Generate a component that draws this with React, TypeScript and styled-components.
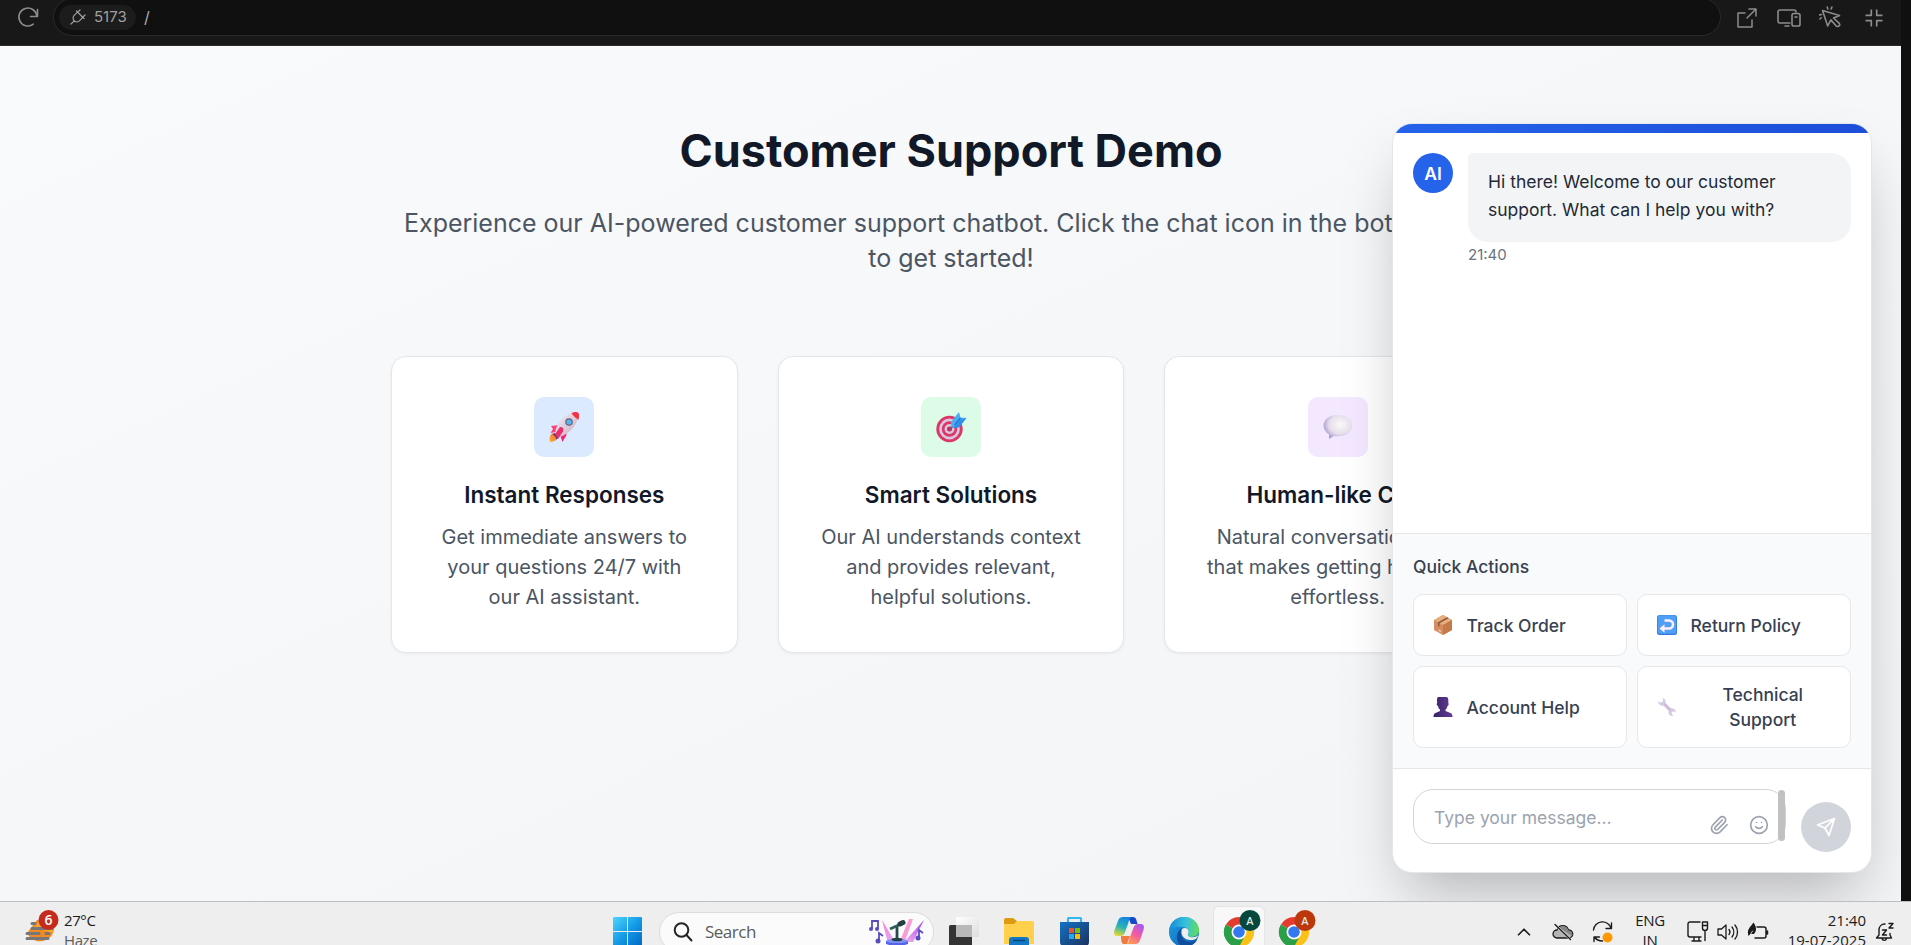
import React from "react";
import styled, { createGlobalStyle } from "styled-components";
import { Paperclip, Smile, ChevronUp } from "lucide-react";

const GlobalStyle = createGlobalStyle`
  *, *::before, *::after { box-sizing: border-box; }
  body { margin: 0; overflow: hidden; font-family: Inter, "Liberation Sans", sans-serif; }
  h1, h2, h3, p { margin: 0; }
  button { font: inherit; margin: 0; }
  svg { display: block; flex: none; }
`;

const Screen = styled.div`
  display: flex;
  flex-direction: column;
  width: 1911px;
  height: 945px;
  overflow: hidden;
  background: #101010;
`;

const Workspace = styled.div`
  display: flex;
  height: 901px;
  flex: none;
`;

const Viewport = styled.div`
  display: flex;
  flex-direction: column;
  width: 1901px;
`;

/* Preview toolbar */

const Toolbar = styled.header`
  display: flex;
  align-items: flex-start;
  height: 46px;
  flex: none;
  padding-left: 16px;
  background: #181818;
  border-bottom: 1px solid #2b2b2b;
  color: #8c8c8c;
  overflow: hidden;
`;

const ToolIcon = styled.span<{ $left: number; $top: number }>`
  margin-left: ${(p) => p.$left}px;
  margin-top: ${(p) => p.$top}px;
`;

const AddressBar = styled.div`
  display: flex;
  align-items: center;
  width: 1668px;
  height: 38px;
  margin: -2px 0 0 13px;
  padding-left: 5px;
  background: #101010;
  border: 1px solid #292929;
  border-radius: 19px;
  font-size: 16px;
  line-height: 20px;
  color: #ababab;
`;

const PortChip = styled.span`
  display: flex;
  align-items: center;
  gap: 8px;
  width: 77px;
  height: 25px;
  padding-left: 11px;
  margin-right: 8px;
  border-radius: 13px;
  background: #1c1c1c;
  color: #a0a0a0;
  font-size: 15px;
`;

/* Demo page */

const Page = styled.main`
  position: relative;
  flex: 1;
  overflow: hidden;
  padding: 80px 0 0 1px;
  background: linear-gradient(to bottom right, #f9fafb, #f3f4f6);
`;

const Content = styled.div`
  width: 1120px;
  margin: 0 auto;
  text-align: center;
`;

const Title = styled.h1`
  font-size: 45px;
  line-height: 50px;
  font-weight: 700;
  color: #111827;
`;

const Lead = styled.p`
  margin-top: 30px;
  font-size: 25px;
  line-height: 35px;
  color: #4b5563;
`;

const Features = styled.div`
  display: grid;
  grid-template-columns: repeat(3, 1fr);
  gap: 40px;
  margin-top: 80px;
`;

const FeatureCard = styled.article`
  display: flex;
  flex-direction: column;
  align-items: center;
  height: 297px;
  padding: 40px;
  background: #fff;
  border: 1px solid #e5e7eb;
  border-radius: 15px;
  box-shadow: 0 1px 3px rgba(0, 0, 0, 0.06);
`;

const FeatureIcon = styled.div<{ $bg: string }>`
  display: flex;
  align-items: center;
  justify-content: center;
  width: 60px;
  height: 60px;
  border-radius: 10px;
  background: ${(p) => p.$bg};
`;

const FeatureTitle = styled.h3`
  margin-top: 20px;
  font-size: 22.5px;
  line-height: 35px;
  font-weight: 600;
  color: #111827;
  white-space: nowrap;
`;

const FeatureText = styled.p`
  margin-top: 10px;
  font-size: 20px;
  line-height: 30px;
  color: #4b5563;
`;

/* Chat widget */

const ChatPanel = styled.section`
  position: absolute;
  top: 77px;
  right: 29px;
  display: flex;
  flex-direction: column;
  width: 480px;
  height: 750px;
  border: 1px solid #e5e7eb;
  border-radius: 20px;
  background: #fff;
  overflow: hidden;
  box-shadow: 0 31px 62px -14px rgba(0, 0, 0, 0.27);
`;

const ChatHeader = styled.div`
  height: 9px;
  flex: none;
  background: linear-gradient(to right, #2563eb, #1d4ed8);
`;

const Messages = styled.div`
  display: flex;
  align-items: flex-start;
  gap: 15px;
  height: 400px;
  padding: 20px;
`;

const Avatar = styled.div`
  display: flex;
  align-items: center;
  justify-content: center;
  width: 40px;
  height: 40px;
  flex: none;
  border-radius: 50%;
  background: #2563eb;
  color: #fff;
  font-size: 17.5px;
  font-weight: 600;
`;

const MessageBody = styled.div`
  flex: 1;
`;

const Bubble = styled.p`
  height: 89px;
  padding: 15px 20px;
  border-radius: 20px;
  border-top-left-radius: 5px;
  background: #f3f4f6;
  color: #1f2937;
  font-size: 17.5px;
  line-height: 28.4px;
`;

const Timestamp = styled.div`
  margin-top: 3px;
  font-size: 15px;
  line-height: 20px;
  color: #6b7280;
`;

const QuickActions = styled.div`
  height: 235px;
  padding: 20px 20px 0;
  border-top: 1px solid #e5e7eb;
  background: #f9fafb;
`;

const QuickTitle = styled.div`
  margin-bottom: 15px;
  font-size: 17.5px;
  line-height: 25px;
  font-weight: 500;
  color: #374151;
`;

const ActionGrid = styled.div`
  display: grid;
  grid-template-columns: 1fr 1fr;
  grid-template-rows: 62px 82px;
  gap: 10px;
`;

const ActionButton = styled.button<{ $wrap?: boolean }>`
  display: flex;
  align-items: center;
  gap: 13.5px;
  padding: 0 15px 0 19px;
  border: 1px solid #e5e7eb;
  border-radius: 10px;
  background: #fff;
  color: #374151;
  font-size: 17.5px;
  line-height: 25px;
  font-weight: 500;
  span {
    flex: ${(p) => (p.$wrap ? 1 : "none")};
  }
`;

const Composer = styled.div`
  display: flex;
  align-items: flex-start;
  flex: 1;
  padding: 20px;
  border-top: 1px solid #e5e7eb;
`;

const InputShell = styled.div`
  display: flex;
  align-items: flex-start;
  width: 373px;
  height: 55px;
  padding-left: 20px;
  border: 1px solid #d1d5db;
  border-radius: 20px;
  color: #9ca3af;
  font-size: 17.5px;
  line-height: 25px;
`;

const Placeholder = styled.span`
  flex: 1;
  padding-top: 15px;
`;

const InputTools = styled.div`
  display: flex;
  gap: 20px;
  margin: 25px 9px 0 0;
`;

const ScrollThumb = styled.span`
  width: 7px;
  height: 51px;
  border-radius: 3.5px;
  background: #c1c1c1;
`;

const SendButton = styled.button`
  display: flex;
  align-items: center;
  justify-content: center;
  width: 50px;
  height: 50px;
  margin: 13px 0 0 15px;
  padding: 0;
  border: 0;
  border-radius: 50%;
  background: #d1d5db;
  color: #fff;
`;

/* Desktop taskbar */

const Taskbar = styled.footer`
  display: flex;
  align-items: center;
  height: 60px;
  flex: none;
  background: #eee;
  border-top: 1px solid #bdbfc0;
  font-family: "Open Sans", "Noto Sans", sans-serif;
  color: #1b1b1b;
  font-size: 15px;
  line-height: 20px;
`;

const Weather = styled.div`
  display: flex;
  align-items: center;
  gap: 5px;
  width: 602px;
  padding-left: 23px;
`;

const WeatherText = styled.div`
  padding-bottom: 4px;
  letter-spacing: -0.4px;
  div + div { color: #5d5d5d; letter-spacing: -0.4px; }
`;

const TaskSlot = styled.div<{ $active?: boolean }>`
  display: flex;
  align-items: center;
  justify-content: center;
  width: 50px;
  height: 50px;
  margin-right: 5px;
  border-radius: 5px;
  background: ${(p) => (p.$active ? "#f8f8f8" : "transparent")};
  box-shadow: ${(p) => (p.$active ? "0 0 0 1px #e5e5e5" : "none")};
`;

const SearchBox = styled.div`
  display: flex;
  align-items: center;
  width: 275px;
  height: 40px;
  padding: 0 8px 0 13px;
  margin: 0 5px 0 2px;
  border: 1px solid #dcdcdc;
  border-radius: 20px;
  background: #fbfbfb;
  color: #5c5c5c;
  font-size: 17px;
  span { flex: 1; margin-left: 12px; letter-spacing: -0.5px; }
`;

const Tray = styled.div`
  display: flex;
  align-items: center;
  margin-left: auto;
  padding-right: 8px;
`;

const TraySlot = styled.div<{ $w: number }>`
  display: flex;
  justify-content: center;
  width: ${(p) => p.$w}px;
`;

const TrayText = styled.div<{ $w: number; $right?: boolean }>`
  width: ${(p) => p.$w}px;
  padding-bottom: 4px;
  padding-right: ${(p) => (p.$right ? 1 : 5)}px;
  text-align: ${(p) => (p.$right ? "right" : "center")};
  letter-spacing: ${(p) => (p.$right ? "0" : "-0.35px")};
`;

const line = { fill: "none", stroke: "currentColor", strokeLinecap: "round", strokeLinejoin: "round" } as const;

const ReloadIcon = () => (
  <svg width="24" height="24" viewBox="0 0 24 24" {...line} strokeWidth="1.6">
    <path d="M17.300 18.200A9 9 0 1 1 20.800 10M21.500 3.500v7h-7" />
  </svg>
);

const PlugIcon = () => (
  <svg width="16" height="16" viewBox="0 0 16 16" {...line} strokeWidth="1.2">
    <path d="M1 15l3.200-3.200M10 1L7.800 3.200M15 6l-2.200 2.200M6.500 2l7.500 7.500M7.500 3.200L4 6.700c-1.500 1.600-1 4 .2 5.100s3.600 1.700 5.200.1l3.300-3.500" />
  </svg>
);

const PopOutIcon = () => (
  <svg width="20" height="20" viewBox="0 0 20 20" {...line} strokeWidth="1.5">
    <path d="M8 5H1v14h14v-7M12 1h7v7M19 1l-9 9" />
  </svg>
);

const DevicesIcon = () => (
  <svg width="24" height="18" viewBox="0 0 24 18" {...line} strokeWidth="1.6">
    <path d="M13 14H3a2 2 0 0 1-2-2V3a2 2 0 0 1 2-2h14a2 2 0 0 1 2 2M8 17h4" />
    <rect x="15" y="4.5" width="8" height="12.5" rx="1.8" />
    <path d="M18 8h2" />
  </svg>
);

const PickerIcon = () => (
  <svg width="22" height="22" viewBox="0 0 22 22" {...line} strokeWidth="1.6">
    <path d="M3.5 4.5l5.2 15.4 3.2-6 5.5 6.3c2 1 4.2-.8 2.9-2.8L14.500 12l6-2.5z" />
    <path d="M8.800 3L8.200 1M12.200 3l.7-2M2.500 8.500l-2 .4M2.200 11.800L1 13" />
  </svg>
);

const CollapseIcon = () => (
  <svg width="18" height="18" viewBox="0 0 18 18" {...line} strokeWidth="1.7" strokeLinecap="butt">
    <path d="M.5 6.300h5.800V.500M17.500 6.300h-5.800V.500M.5 11.700h5.800v5.800M17.500 11.700h-5.800v5.800" />
  </svg>
);

const RocketArt = () => (
  <svg width="32" height="32" viewBox="0 0 32 32">
    <defs>
      <linearGradient id="rkBody" x1="0" y1="0" x2="1" y2="1">
        <stop offset="0" stopColor="#f4f0f8" /><stop offset="1" stopColor="#c9a9bd" />
      </linearGradient>
      <linearGradient id="rkFire" x1="1" y1="0" x2="0" y2="1">
        <stop offset="0" stopColor="#f0663c" /><stop offset="1" stopColor="#ffb031" />
      </linearGradient>
    </defs>
    <path d="M3.500 23c2-2 6 0 6 3s-3 4.500-7.500 5C1 28 1.500 25 3.500 23z" fill="url(#rkFire)" />
    <path d="M3 15l9-1-4 7-5.500 1 2.500-4z" fill="#ff3f78" />
    <path d="M18 19l.500 5-4 7-2.500-7z" fill="#f5246b" />
    <path d="M6.500 22l4 5-2 1.500c-1-3-2-4-4-5z" fill="#5b3d77" />
    <path d="M7 22C8 12 17 2.500 27 1.500c3 0 4 1 3.500 4C29 14 21 23 12 26z" fill="url(#rkBody)" />
    <path d="M23.500 2c7-2.500 8.500-.5 7 6.800C29 8 25 5 23.500 2z" fill="#f5303f" />
    <path d="M12 16c3 0 4 2 3 4.500L10 28l-3-5z" fill="#e92f70" />
    <circle cx="21" cy="11" r="3.800" fill="#66607d" />
    <circle cx="21" cy="11" r="2.600" fill="#55b4f2" />
  </svg>
);

const TargetArt = () => (
  <svg width="32" height="32" viewBox="0 0 32 32">
    <circle cx="14.500" cy="18" r="13.200" fill="#dc3667" />
    <circle cx="14.500" cy="18" r="10.400" fill="#d9c7df" />
    <circle cx="14.500" cy="18" r="7.700" fill="#dc3667" />
    <circle cx="14.500" cy="18" r="5" fill="#d9c7df" />
    <circle cx="14.500" cy="18" r="2.500" fill="#c72d5b" />
    <path d="M15 18l8-8" stroke="#7b5682" strokeWidth="2" />
    <path d="M16.500 16l-.500-5L24 1l1.500 5.500 6 .5-8 8.500z" fill="#48aff5" />
    <path d="M18 17l8-8.500 5.500-1.500L24 16.500z" fill="#2f8fe8" />
    <path d="M19.500 14l6-7" stroke="#2374ce" strokeWidth="1.400" />
  </svg>
);

const BubbleArt = () => (
  <svg width="32" height="26" viewBox="0 0 32 26">
    <defs>
      <radialGradient id="bb" cx=".6" cy=".4" r=".62">
        <stop offset="0" stopColor="#fbfafb" /><stop offset=".65" stopColor="#e6deea" /><stop offset="1" stopColor="#ad9fd0" />
      </radialGradient>
    </defs>
    <path d="M16 1C7 1 1.500 6 1.500 11.500c0 4 2.500 7 5.500 9V25l5-3c11 1.500 18-3.500 18-10.500S24 1 16 1z" fill="url(#bb)" />
  </svg>
);

const BoxArt = () => (
  <svg width="20" height="20" viewBox="0 0 20 20">
    <path d="M1 5l9-5 9 5v10l-9 5-9-5z" fill="#d58d5d" />
    <path d="M1 5l9-5 9 5-9 5z" fill="#e7af7c" />
    <path d="M10 10l9-5v10l-9 5z" fill="#c47a4b" />
    <path d="M5 7.300l9-5 1.700.900L6.500 8.300v3.500L5 11z" fill="#8b5a44" />
    <path d="M5.500 14l2.500 1.500v2L5.500 16z" fill="#f1bcb8" />
  </svg>
);

const ReturnArt = () => (
  <svg width="20" height="20" viewBox="0 0 20 20">
    <rect width="20" height="20" rx="2.500" fill="#3479df" />
    <rect x=".7" y=".3" width="18.500" height="18.500" rx="2" fill="#4f9ff8" />
    <path d="M7.500 5.500h4.500a4 4 0 0 1 0 8H6" fill="none" stroke="#fff0fb" strokeWidth="2.600" />
    <path d="M2.500 13.500l5-4.300v8.600z" fill="#fff0fb" />
  </svg>
);

const PersonArt = () => (
  <svg width="20" height="20" viewBox="0 0 20 20">
    <defs>
      <linearGradient id="pp" x1="0" x2="1">
        <stop offset="0" stopColor="#3a2467" /><stop offset="1" stopColor="#633d98" />
      </linearGradient>
    </defs>
    <path d="M5 0h9c1.500 1 1.500 4 1.300 6 .8.500.3 3-.8 3-.4 2-1 3-2 3.700V14l5 2c1.500.600 2 2 2 4H.500c0-2 .5-3.400 2-4l4.500-2v-1.300C6 12 5.300 11 5 9c-1.200 0-1.700-2.500-.8-3C4 4 3.500 1 5 0z" fill="url(#pp)" />
  </svg>
);

const WrenchArt = () => (
  <svg width="20" height="20" viewBox="0 0 20 20">
    <path d="M5.500.800c2.800 1 3.600 3.400 3 5.200l5.200 5.200c2.600-.4 5 1 5.300 4l-2.700-1-1.900 1.900 1.800 3.100c-3.400 0-5.200-2.200-4.600-5.200L6.300 8.700C3.600 9 1.200 7.400 1 4.300l3 1.400 2.200-1.900z" fill="#d6cadf" />
    <path d="M7 6.500l6.500 6.500" stroke="#c4b1e0" strokeWidth="1.300" />
  </svg>
);

const SendIcon = () => (
  <svg width="20" height="20" viewBox="0 0 20 20" {...line} strokeWidth="1.700">
    <path d="M18.500 1.500L1.500 8l7.500 3 4 7.500zM18.500 1.500L9 11" />
  </svg>
);

const HazeIcon = () => (
  <svg width="36" height="48" viewBox="0 0 36 48">
    <path d="M4 25a14 14 0 0 0 26-12l-16-1z" fill="#f28a24" />
    <path d="M12 19a14 14 0 0 1 19-6c1 5 0 9-2 12z" fill="#f9a62a" />
    <path d="M9 15.500h3M9 20.500h20M4 25.500h12M23 25.500h3M4 30.500h21" stroke="#75777a" strokeWidth="3" strokeLinecap="round" />
    <circle cx="25.500" cy="12" r="10" fill="#c42b1c" />
    <text x="25.500" y="17" textAnchor="middle" fontSize="14" fontWeight="600" fill="#fff">6</text>
  </svg>
);

const WindowsIcon = () => (
  <svg width="29" height="29" viewBox="0 0 29 29">
    <defs>
      <linearGradient id="win" x1="0" y1="0" x2="1" y2="1">
        <stop offset="0" stopColor="#50d5ff" /><stop offset=".5" stopColor="#159be7" /><stop offset="1" stopColor="#0067c5" />
      </linearGradient>
    </defs>
    <path d="M1 0h13v14H0V1a1 1 0 0 1 1-1zM15 0h13a1 1 0 0 1 1 1v13H15zM0 15h14v14H0zM15 15h14v14H15z" fill="url(#win)" />
  </svg>
);

const MagnifierIcon = () => (
  <svg width="20" height="20" viewBox="0 0 20 20" {...line} strokeWidth="2" color="#252525">
    <circle cx="8.500" cy="8" r="6.800" /><path d="M13.500 13l5 5.500" />
  </svg>
);

const MusicArt = () => (
  <svg width="56" height="30" viewBox="0 0 56 30">
    <defs>
      <linearGradient id="beamA" x1="0" y1="0" x2="1" y2="1"><stop offset="0" stopColor="#ff7ad1" /><stop offset="1" stopColor="#d9b0fc" /></linearGradient>
      <linearGradient id="beamB" x1="1" y1="0" x2="0" y2="1"><stop offset="0" stopColor="#a642ef" /><stop offset="1" stopColor="#f6b4ec" /></linearGradient>
    </defs>
    <path d="M13 3l12 20-6 3z" fill="url(#beamA)" />
    <path d="M40 2h4l-8 22h-5z" fill="#fa9cd7" />
    <path d="M55 3L35 25h9z" fill="url(#beamB)" />
    <path d="M28 9v14" stroke="#254b4b" strokeWidth="2.800" />
    <path d="M21 12l11-5" stroke="#315d5b" strokeWidth="3" />
    <path d="M31 7l3-1.500" stroke="#223e43" strokeWidth="5" strokeLinecap="round" />
    <path d="M17 24h22v3q-11 4-22 0z" fill="#5663e9" /><ellipse cx="28" cy="24" rx="11" ry="2" fill="#7d94fb" />
    <ellipse cx="28" cy="22.500" rx="5.500" ry="1.800" fill="#243f47" />
    <g fill="none" stroke="#584bbd" strokeWidth="1.800"><path d="M3 12V4h6v8M10 24v-8l4 3M50 21v-8l4 3" /></g>
    <g fill="#584bbd"><circle cx="2" cy="12" r="2" /><circle cx="8" cy="12" r="2" /><circle cx="9" cy="24" r="2.500" /><circle cx="49" cy="21" r="2.500" /></g>
  </svg>
);

const TaskViewIcon = () => (
  <svg width="30" height="29" viewBox="0 0 30 29">
    <defs><linearGradient id="tv" x1="0" x2="1" y2="1"><stop offset="0" stopColor="#fff" /><stop offset="1" stopColor="#ddd" /></linearGradient></defs>
    <rect y="8" width="23" height="21" rx="1.500" fill="#343434" />
    <rect x="7" y="0" width="23" height="20" rx="1.500" fill="url(#tv)" />
    <path d="M7 8h16v12H8.500a1.500 1.500 0 0 1-1.500-1.500z" fill="#b8b8b8" />
  </svg>
);

const FolderIcon = () => (
  <svg width="30" height="28" viewBox="0 0 30 28">
    <path d="M0 2a2 2 0 0 1 2-2h7l4 3-2 4H0z" fill="#dc9b12" />
    <path d="M0 6h10l3-3h15a2 2 0 0 1 2 2v21H0z" fill="#ffd04c" />
    <path d="M5 28v-6a3 3 0 0 1 3-3h14a3 3 0 0 1 3 3v6z" fill="#1278c5" />
    <path d="M9 22.500h12" stroke="#07477c" strokeWidth="1.500" />
  </svg>
);

const StoreIcon = () => (
  <svg width="29" height="29" viewBox="0 0 29 29">
    <defs><linearGradient id="st" x1="0" x2="1" y2="1"><stop offset="0" stopColor="#1273c5" /><stop offset="1" stopColor="#1d315f" /></linearGradient></defs>
    <path d="M8 6V2a1 1 0 0 1 1-1h11a1 1 0 0 1 1 1v4" fill="none" stroke="#35b6ee" strokeWidth="2.200" />
    <path d="M0 5h29v20a4 4 0 0 1-4 4H4a4 4 0 0 1-4-4z" fill="url(#st)" />
    <path d="M9 11h5v5H9z" fill="#f25022" /><path d="M15 11h5v5h-5z" fill="#7fba00" />
    <path d="M9 17h5v5H9z" fill="#28a8ea" /><path d="M15 17h5v5h-5z" fill="#ffb900" />
  </svg>
);

const CopilotIcon = () => (
  <svg width="30" height="29" viewBox="0 0 30 29">
    <defs>
      <linearGradient id="cpA" x1=".5" y1="0" x2=".2" y2="1"><stop offset="0" stopColor="#1687df" /><stop offset=".5" stopColor="#29b4b6" /><stop offset="1" stopColor="#eadb2c" /></linearGradient>
      <linearGradient id="cpB" x1=".8" y1="0" x2=".2" y2="1"><stop offset="0" stopColor="#a45af1" /><stop offset=".5" stopColor="#f45b9e" /><stop offset="1" stopColor="#ffa14b" /></linearGradient>
    </defs>
    <path d="M14 0h5c3 0 3.500 3 4.500 7H17z" fill="#1746c9" />
    <path d="M7 19h9l-3 8H9.500c-2 0-2.500-4-2.500-8z" fill="#f17a42" />
    <path d="M9 0h9c-3 1-3 4-4 7l-3 8c-1 3-2 4-5 4H3c-3 0-3.500-3-2.500-6L4 4c1-3 2-4 5-4z" fill="url(#cpA)" />
    <path d="M20 27h-8c3-1 3-4 4-7l3-8c1-3 2-5 5-5h3c3 0 3.500 3 2.500 6L26 23c-1 3-2 4-6 4z" fill="url(#cpB)" />
  </svg>
);

const EdgeIcon = () => (
  <svg width="30" height="30" viewBox="0 0 30 30">
    <defs>
      <linearGradient id="egA" x1="0" y1=".4" x2="1" y2=".5"><stop offset="0" stopColor="#168bd5" /><stop offset=".55" stopColor="#38c2dc" /><stop offset="1" stopColor="#62dc57" /></linearGradient>
      <linearGradient id="egB" x1="0" y1="0" x2="1" y2="1"><stop offset="0" stopColor="#1aa2e6" /><stop offset="1" stopColor="#105aad" /></linearGradient>
    </defs>
    <circle cx="15" cy="15" r="15" fill="url(#egB)" />
    <path d="M0 14C1 5 7 0 15 0c9 0 15 6 15 13 0 5-4 7-8 7-3 0-4-2-3-3 2-3 0-7-5-7C8 9 2 10 0 14z" fill="url(#egA)" />
    <path d="M13 11c-3 6 0 14 8 14 3 0 5-1 7-2-2 4-7 7-13 7C7 28 5 16 13 11z" fill="#104e9d" />
    <path d="M13 12c5-3 8 2 6 5-1 2 2 4 6 3 2 0 3-1 4-2 0 3-3 5-7 5-7 0-11-5-9-11z" fill="#eee" />
  </svg>
);

const ChromeIcon = ({ badge }: { badge: string }) => (
  <svg width="50" height="50" viewBox="0 0 50 50">
    <circle cx="25" cy="25" r="15" fill="#fff" />
    <path d="M25 25L12 17.500A15 15 0 0 1 38 17.500z" fill="#e33b2e" />
    <path d="M25 25L38 17.500A15 15 0 0 1 25 40z" fill="#fbc116" />
    <path d="M25 25V40A15 15 0 0 1 12 17.500z" fill="#2b9f48" />
    <path d="M25 18h13A15 15 0 0 1 25 40l6.500-11.500z" fill="#fbc116" />
    <path d="M12 17.500A15 15 0 0 0 25 40l6-11.500-12 0z" fill="#2b9f48" />
    <circle cx="25" cy="25" r="7.500" fill="#fff" /><circle cx="25" cy="25" r="5.800" fill="#3478ef" />
    <circle cx="36" cy="13.500" r="10.500" fill={badge} />
    <text x="36" y="17.500" textAnchor="middle" fontSize="11" fontWeight="600" fill="#dce5df">A</text>
  </svg>
);

const CloudOffIcon = () => (
  <svg width="22" height="18" viewBox="0 0 22 18" {...line} strokeWidth="1.300">
    <path d="M5 15a4 4 0 0 1 0-8 6 6 0 0 1 11.500 0A4 4 0 0 1 17 15z" fill="#b4b4b4" />
    <path d="M7 4.500a6 6 0 0 1 9.500 3C20 8 21 11 20 13z" fill="#858585" stroke="none" />
    <path d="M4 2.500l14.500 14" stroke="#ddd" strokeWidth="2.400" /><path d="M3 1.500l15.500 15" />
  </svg>
);

const SyncIcon = () => (
  <svg width="22" height="22" viewBox="0 0 22 22" {...line} strokeWidth="1.400">
    <path d="M1.500 9A9 9 0 0 1 19 7M19.500 2v5.500H14M7.500 16H2v4.500M2.500 16c2 3 4 4 8 4" />
    <circle cx="15.500" cy="16.500" r="5" fill="#ff9800" stroke="none" />
  </svg>
);

const NetworkIcon = () => (
  <svg width="22" height="21" viewBox="0 0 22 21" {...line} strokeWidth="1.400">
    <path d="M13 1H3a2 2 0 0 0-2 2v11a2 2 0 0 0 2 2h11M7 16v4M12 16v4M5 20h9M15.500 1h5v6a2.500 2.500 0 0 1-5 0zM15.500 4.500h5M18 10v9.500" />
  </svg>
);

const SpeakerIcon = () => (
  <svg width="22" height="20" viewBox="0 0 22 20" {...line} strokeWidth="1.300">
    <path d="M1 7h3.500L9 3v14l-4.500-4H1zM12 7.500a4 4 0 0 1 0 5M15 5a8 8 0 0 1 0 10M18 3a11 11 0 0 1 0 14" />
  </svg>
);

const BatteryIcon = () => (
  <svg width="22" height="20" viewBox="0 0 22 20" {...line} strokeWidth="1.500">
    <path d="M10 5h7a2 2 0 0 1 2 2v7a2 2 0 0 1-2 2H8M20.500 9v3" />
    <path d="M6.500.500c3 4 3.500 8.500.500 11.500H3.500L1.500 14C-.5 8 2.500 6 6.500.500z" fill="currentColor" stroke="none" />
    <path d="M2 15l3.500-6" stroke="#eee" strokeWidth=".8" />
  </svg>
);

const BellIcon = () => (
  <svg width="20" height="20" viewBox="0 0 20 20" {...line} strokeWidth="1.400">
    <path d="M10 2C6 2 4 5 4 8v5l-2.500 3h15L15 13v-1.500M7 16.500c.5 2.500 4 2.500 4.500 0M7.500 8h4l-4 5h4M14 1.500h4L14 6h4" />
  </svg>
);

const features = [
  { icon: <RocketArt />, bg: "#dbeafe", title: "Instant Responses", text: "Get immediate answers to your questions 24/7 with our AI assistant." },
  { icon: <TargetArt />, bg: "#dcfce7", title: "Smart Solutions", text: "Our AI understands context and provides relevant, helpful solutions." },
  { icon: <BubbleArt />, bg: "#f3e8ff", title: "Human-like Chat", text: "Natural conversation flow that makes getting help feel effortless." },
];

const actions = [
  { icon: <BoxArt />, label: "Track Order" },
  { icon: <ReturnArt />, label: "Return Policy" },
  { icon: <PersonArt />, label: "Account Help" },
  { icon: <WrenchArt />, label: "Technical Support", wrap: true },
];

export default function App() {
  return (
    <Screen>
      <GlobalStyle />
      <Workspace>
        <Viewport>
          <Toolbar>
            <ToolIcon $left={0} $top={6}><ReloadIcon /></ToolIcon>
            <AddressBar>
              <PortChip><PlugIcon />5173</PortChip>
              /
            </AddressBar>
            <ToolIcon $left={16} $top={8}><PopOutIcon /></ToolIcon>
            <ToolIcon $left={20} $top={9}><DevicesIcon /></ToolIcon>
            <ToolIcon $left={18} $top={6}><PickerIcon /></ToolIcon>
            <ToolIcon $left={24} $top={9}><CollapseIcon /></ToolIcon>
          </Toolbar>
          <Page>
            <Content>
              <Title>Customer Support Demo</Title>
              <Lead>
                Experience our AI-powered customer support chatbot. Click the chat icon in the bottom right to get started!
              </Lead>
              <Features>
                {features.map((f) => (
                  <FeatureCard key={f.title}>
                    <FeatureIcon $bg={f.bg}>{f.icon}</FeatureIcon>
                    <FeatureTitle>{f.title}</FeatureTitle>
                    <FeatureText>{f.text}</FeatureText>
                  </FeatureCard>
                ))}
              </Features>
            </Content>
            <ChatPanel>
              <ChatHeader />
              <Messages>
                <Avatar>AI</Avatar>
                <MessageBody>
                  <Bubble>Hi there! Welcome to our customer support. What can I help you with?</Bubble>
                  <Timestamp>21:40</Timestamp>
                </MessageBody>
              </Messages>
              <QuickActions>
                <QuickTitle>Quick Actions</QuickTitle>
                <ActionGrid>
                  {actions.map((a) => (
                    <ActionButton key={a.label} $wrap={a.wrap}>
                      {a.icon}
                      <span>{a.label}</span>
                    </ActionButton>
                  ))}
                </ActionGrid>
              </QuickActions>
              <Composer>
                <InputShell>
                  <Placeholder>Type your message...</Placeholder>
                  <InputTools>
                    <Paperclip size={20} strokeWidth={2} />
                    <Smile size={20} strokeWidth={2} />
                  </InputTools>
                  <ScrollThumb />
                </InputShell>
                <SendButton aria-label="Send"><SendIcon /></SendButton>
              </Composer>
            </ChatPanel>
          </Page>
        </Viewport>
      </Workspace>
      <Taskbar>
        <Weather>
          <HazeIcon />
          <WeatherText><div>27°C</div><div>Haze</div></WeatherText>
        </Weather>
        <TaskSlot><WindowsIcon /></TaskSlot>
        <SearchBox><MagnifierIcon /><span>Search</span><MusicArt /></SearchBox>
        <TaskSlot><TaskViewIcon /></TaskSlot>
        <TaskSlot><FolderIcon /></TaskSlot>
        <TaskSlot><StoreIcon /></TaskSlot>
        <TaskSlot><CopilotIcon /></TaskSlot>
        <TaskSlot><EdgeIcon /></TaskSlot>
        <TaskSlot $active><ChromeIcon badge="#06483d" /></TaskSlot>
        <TaskSlot><ChromeIcon badge="#bd370d" /></TaskSlot>
        <Tray>
          <TraySlot $w={39}><ChevronUp size={22} strokeWidth={1.8} /></TraySlot>
          <TraySlot $w={40}><CloudOffIcon /></TraySlot>
          <TraySlot $w={40}><SyncIcon /></TraySlot>
          <TrayText $w={59}>ENG<br />IN</TrayText>
          <TraySlot $w={31}><NetworkIcon /></TraySlot>
          <TraySlot $w={30}><SpeakerIcon /></TraySlot>
          <TraySlot $w={30}><BatteryIcon /></TraySlot>
          <TrayText $w={94} $right>21:40<br />19-07-2025</TrayText>
          <TraySlot $w={36}><BellIcon /></TraySlot>
        </Tray>
      </Taskbar>
    </Screen>
  );
}
